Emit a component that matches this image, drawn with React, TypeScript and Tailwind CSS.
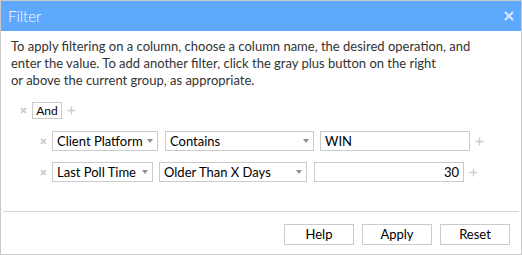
const font = "font-['Lato','Segoe_UI','Liberation_Sans',sans-serif]";

const XMark = () => (
  <svg width="7" height="7" viewBox="0 0 7 7" className="shrink-0">
    <path d="M1 1 L6 6 M6 1 L1 6" stroke="#c6c6c6" strokeWidth="1.6" />
  </svg>
);

const Plus = () => (
  <svg width="9" height="9" viewBox="0 0 9 9" className="shrink-0">
    <path d="M4.5 0.5 V8.5 M0.5 4.5 H8.5" stroke="#cccccc" strokeWidth="1.4" />
  </svg>
);

const Caret = () => (
  <svg width="6" height="4" viewBox="0 0 6 4" className="shrink-0">
    <path d="M0 0 H6 L3 4 Z" fill="#8f8f8f" />
  </svg>
);

const Select = ({ label, width }: { label: string; width: string }) => (
  <div
    className={`${width} h-[20px] border border-[#cbcbcb] bg-white flex items-center justify-between pl-[4px] pr-[4px] text-[13px] text-black`}
  >
    <span className="leading-none">{label}</span>
    <Caret />
  </div>
);

const Field = ({ value, right }: { value: string; right?: boolean }) => (
  <div
    className={`w-[150px] h-[20px] border border-[#cbcbcb] bg-white flex items-center px-[4px] text-[13px] text-black ${
      right ? "justify-end" : "justify-start"
    }`}
  >
    <span className="leading-none">{value}</span>
  </div>
);

export default function App() {
  const rows = [
    { column: "Client Platform", colW: "w-[106px]", op: "Contains", opW: "w-[149px]", value: "WIN", right: false, gapA: "gap-[7px]", gapB: "gap-[6px]" },
    { column: "Last Poll Time", colW: "w-[101px]", op: "Older Than X Days", opW: "w-[148px]", value: "30", right: true, gapA: "gap-[6px]", gapB: "gap-[7px]" },
  ];

  return (
    <div className={`w-[522px] h-[255px] border border-[#cacaca] bg-white flex flex-col ${font}`}>
      {/* Title bar */}
      <div className="h-[30px] bg-[#5ea8fe] flex items-center justify-between pl-[7px] pr-[7px]">
        <span className="text-white text-[15px] font-light">Filter</span>
        <svg width="10" height="10" viewBox="0 0 10 10">
          <path d="M1 1 L9 9 M9 1 L1 9" stroke="#d4e9ff" strokeWidth="2" />
        </svg>
      </div>

      {/* Body */}
      <div className="flex-1 flex flex-col">
        <p className="mt-[7px] px-[10px] text-[13px] leading-[17px] text-[#333333]">
          To apply filtering on a column, choose a column name, the desired operation, and
          <br />
          enter the value. To add another filter, click the gray plus button on the right
          <br />
          or above the current group, as appropriate.
        </p>

        <div className="mt-[13px] pl-[19px] flex flex-col">
          {/* Group header */}
          <div className="h-[17px] flex items-center gap-[5px]">
            <XMark />
            <div className="h-[17px] w-[30px] border border-[#cbcbcb] flex items-center justify-center text-[12px] text-black">
              And
            </div>
            <Plus />
          </div>

          {/* Conditions */}
          <div className="pl-[20px] flex flex-col">
            {rows.map((r, i) => (
              <div key={i} className={`${i === 0 ? "mt-[12px]" : "mt-[11px]"} h-[20px] flex items-center gap-[5px]`}>
                <XMark />
                <div className={`flex items-center ${r.gapA}`}>
                  <Select label={r.column} width={r.colW} />
                  <div className={`flex items-center ${r.gapB}`}>
                    <Select label={r.op} width={r.opW} />
                    <Field value={r.value} right={r.right} />
                  </div>
                </div>
                <Plus />
              </div>
            ))}
          </div>
        </div>
      </div>

      {/* Footer */}
      <div className="mx-[2px] border-t border-[#d6d6d6] h-[43px] flex items-start justify-end gap-[8px] pt-[12px] pr-[9px]">
        {["Help", "Apply", "Reset"].map((b) => (
          <button
            key={b}
            className="w-[70px] h-[21px] border border-[#cbcbcb] bg-white text-[13px] text-black flex items-center justify-center"
          >
            {b}
          </button>
        ))}
      </div>
    </div>
  );
}
